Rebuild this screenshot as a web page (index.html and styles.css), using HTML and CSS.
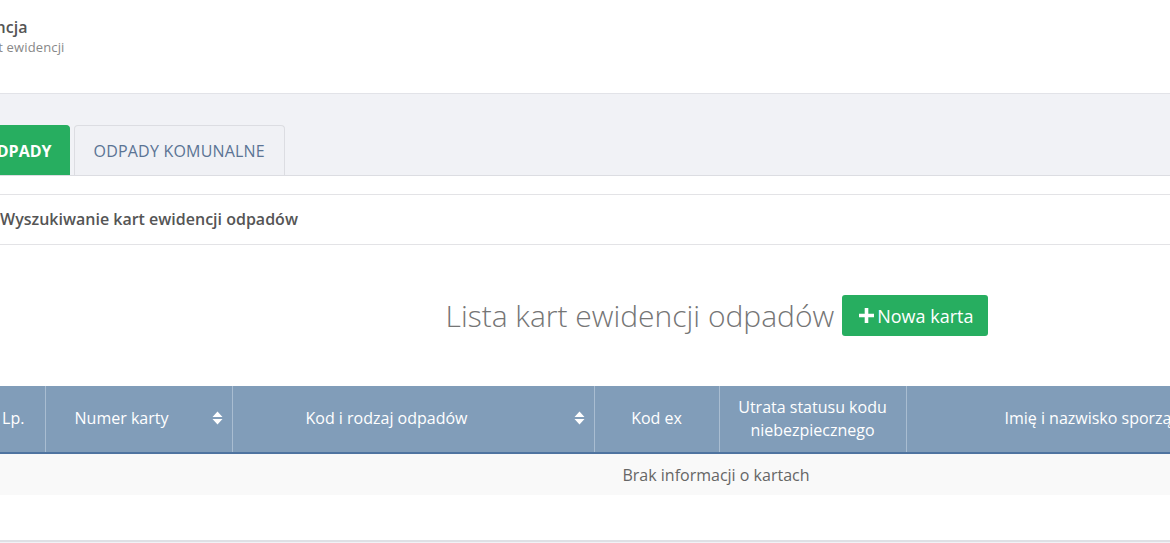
FILE: index.html
```html
<!DOCTYPE html>
<html lang="pl">
<head>
<meta charset="utf-8">
<title>Ewidencja</title>
<link rel="stylesheet" href="styles.css">
</head>
<body>
<div class="page">
  <header class="topbar">
    <div class="title-block">
      <h1 class="title">Ewidencja</h1>
      <p class="subtitle">Lista kart ewidencji</p>
    </div>
  </header>

  <div class="tabs-band">
    <nav class="tabs">
      <a class="tab tab-active">ODPADY</a>
      <a class="tab">ODPADY KOMUNALNE</a>
    </nav>
  </div>

  <main class="card">
    <section class="panel">
      <div class="panel-head">Wyszukiwanie kart ewidencji odpadów</div>
    </section>

    <div class="list-head">
      <h2 class="list-title">Lista kart ewidencji odpadów</h2>
      <button class="btn-new" type="button">
        <svg class="plus" viewBox="0 0 15 15" width="15" height="15" aria-hidden="true"><path d="M5.7 0h3.6v5.7H15v3.6H9.3V15H5.7V9.3H0V5.7h5.7z" fill="#fff"/></svg>
        <span>Nowa karta</span>
      </button>
    </div>

    <table class="grid">
      <colgroup>
        <col class="c-lp"><col class="c-num"><col class="c-kod"><col class="c-ex"><col class="c-utr"><col class="c-imie"><col class="c-akc">
      </colgroup>
      <thead>
        <tr>
          <th>Lp.</th>
          <th class="sortable s-num"><span>Numer karty</span><svg class="sort" viewBox="0 0 11 14" width="11" height="14" aria-hidden="true"><path d="M5.5 0.5 10.5 6H0.5z M5.5 13.5 0.5 8H10.5z" fill="#fff"/></svg></th>
          <th class="sortable s-kod"><span>Kod i rodzaj odpadów</span><svg class="sort" viewBox="0 0 11 14" width="11" height="14" aria-hidden="true"><path d="M5.5 0.5 10.5 6H0.5z M5.5 13.5 0.5 8H10.5z" fill="#fff"/></svg></th>
          <th>Kod ex</th>
          <th>Utrata statusu kodu<br>niebezpiecznego</th>
          <th>Imię i nazwisko sporządzającego</th>
          <th>Akcje</th>
        </tr>
      </thead>
      <tbody>
        <tr class="empty">
          <td colspan="7">Brak informacji o kartach</td>
        </tr>
      </tbody>
    </table>
  </main>
</div>
</body>
</html>
```

FILE: styles.css
```css
* { box-sizing: border-box; }

html, body {
  margin: 0;
  padding: 0;
  background: #f1f2f6;
  overflow: hidden;
  font-family: "Open Sans", "Noto Sans", sans-serif;
  color: #555;
}

.page {
  margin-left: -33px;
  width: 1498px;
}

/* top header */
.topbar {
  background: #fff;
  height: 94px;
  border-bottom: 1px solid #e2e3e8;
  padding-top: 16px;
}

.title-block {
  margin-left: -17px;
}

.title {
  margin: 0;
  font-size: 16px;
  font-weight: 600;
  line-height: 22px;
  color: #555;
}

.subtitle {
  margin: 1px 0 0 -4px;
  font-size: 13px;
  letter-spacing: 0.15px;
  line-height: 16px;
  color: #888;
}

/* tabs */
.tabs-band {
  height: 82px;
  padding: 31px 0 0 0;
  border-bottom: 1px solid #dcdde2;
}

.tabs {
  display: flex;
  gap: 4px;
  height: 50px;
}

.tab {
  display: flex;
  align-items: center;
  height: 50px;
  padding: 0 19px;
  font-size: 16px;
  letter-spacing: 0.2px;
  color: #5b7494;
  background: #f0f1f5;
  border: 1px solid #dcdde2;
  border-bottom: none;
  border-radius: 4px 4px 0 0;
}

.tab-active {
  background: #27ae60;
  border-color: #27ae60;
  color: #fff;
  font-weight: 700;
  letter-spacing: 0;
  padding: 0 17px 0 16px;
}

/* card */
.card {
  background: #fff;
  padding: 18px 15px 45px;
  border-bottom: 2px solid #dfe0e5;
}

.panel {
  border-top: 1px solid #e3e3e6;
  border-bottom: 1px solid #e3e3e6;
}

.panel-head {
  height: 49px;
  display: flex;
  align-items: center;
  padding-left: 18px;
  padding-bottom: 1px;
  font-size: 16px;
  font-weight: 600;
  color: #555;
}

.list-head {
  display: flex;
  justify-content: center;
  align-items: center;
  gap: 8px;
  margin: 50px 0 50px;
  padding-left: 2px;
  height: 41px;
}

.list-title {
  margin: 0;
  font-size: 30px;
  font-weight: 300;
  color: #757575;
  line-height: 41px;
}

.btn-new {
  display: flex;
  align-items: center;
  gap: 3px;
  height: 41px;
  padding: 0 15px 0 17px;
  border: none;
  border-radius: 3px;
  background: #27ae60;
  color: #fff;
  font-family: inherit;
  font-size: 18px;
  font-weight: 400;
}

.plus { display: block; }

/* table */
.grid {
  width: 100%;
  border-collapse: collapse;
  table-layout: fixed;
}

.c-lp { width: 63px; }
.c-num { width: 187px; }
.c-kod { width: 362px; }
.c-ex { width: 125px; }
.c-utr { width: 187px; }
.c-imie { width: 438px; }

.grid th {
  height: 67px;
  background: #819db9;
  color: #fff;
  font-weight: 400;
  font-size: 16px;
  line-height: 23px;
  text-align: center;
  padding: 0 6px 1px;
  border-left: 1px solid #a9bdd1;
  border-bottom: 2px solid #4f74a0;
}

.grid th:first-child { border-left: none; }

.grid th.sortable {
  position: relative;
}

.grid th.s-num { padding-right: 40px; }
.grid th.s-kod { padding-right: 59px; }

.grid th.sortable .sort {
  position: absolute;
  right: 9px;
  top: 25px;
}

.grid td {
  height: 42px;
  padding-bottom: 1px;
  background: #f9f9f9;
  text-align: center;
  font-size: 16px;
  color: #666;
}
```
